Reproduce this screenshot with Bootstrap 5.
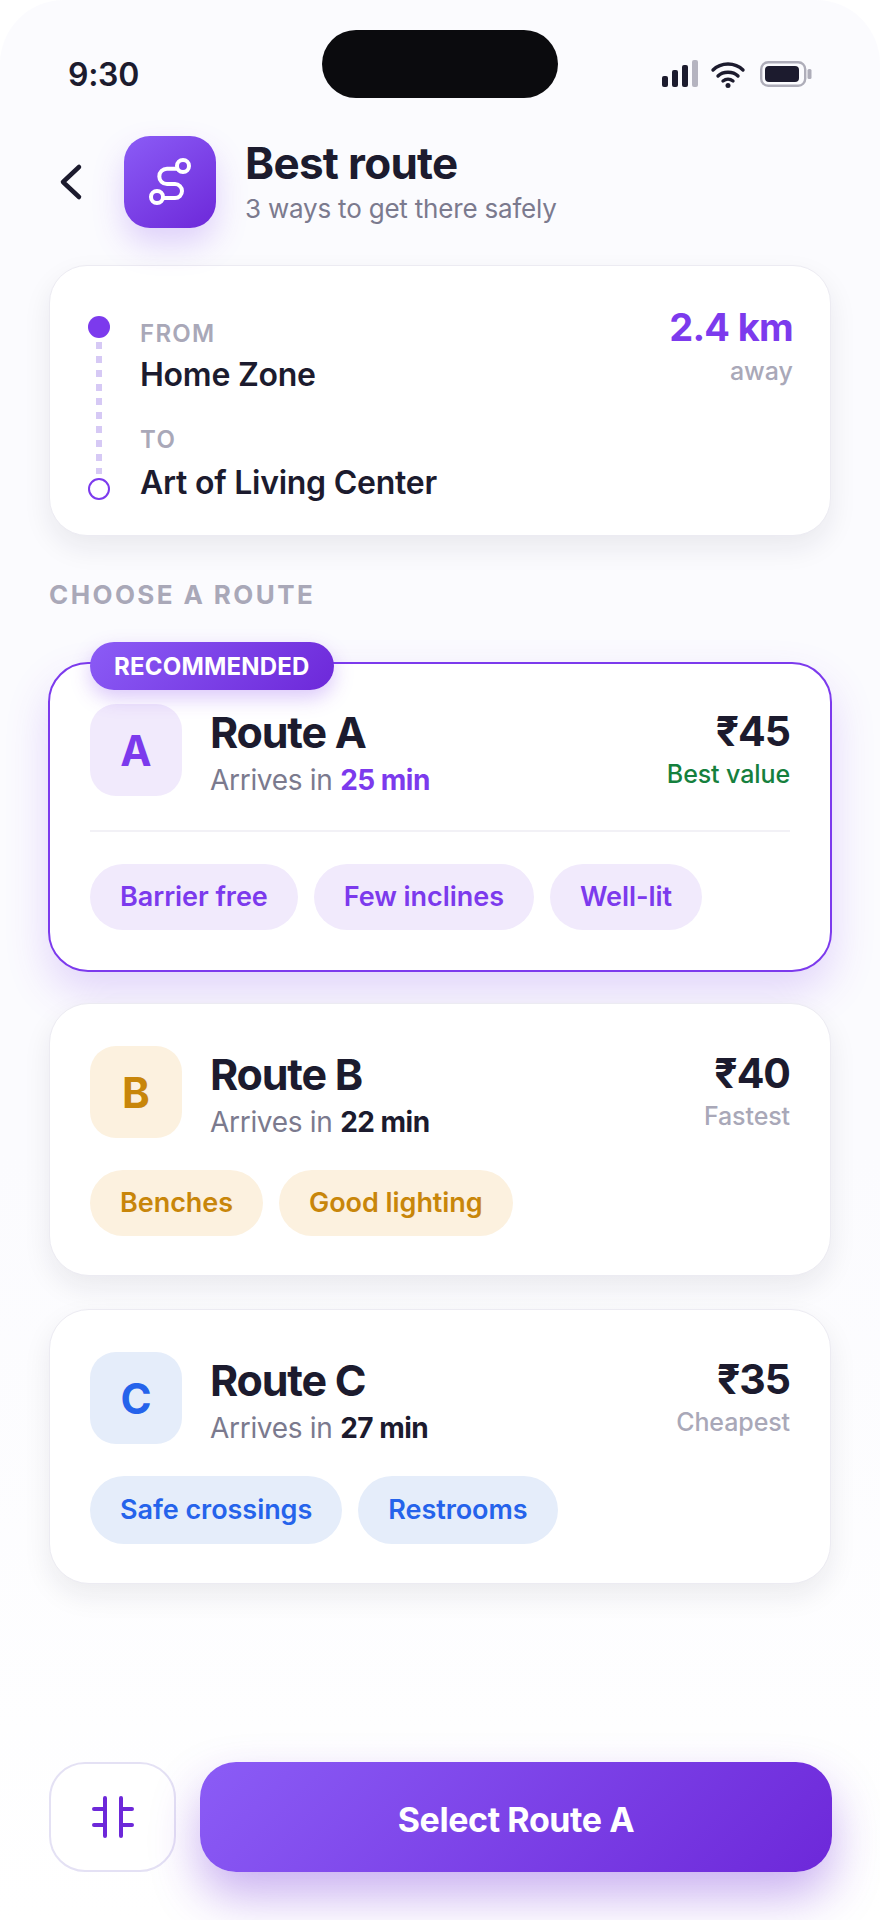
<!DOCTYPE html>
<html lang="en">
  <head>
    <meta charset="UTF-8" />
    <meta name="viewport" content="width=device-width, initial-scale=1.0" />
    <title>Best route</title>
    <link href="https://cdn.jsdelivr.net/npm/bootstrap@5.3.0/dist/css/bootstrap.min.css" rel="stylesheet" />
    <style>
      body {
        background: #fff;
        font-family: "Inter", "Noto Sans", sans-serif;
        color: #1c1b2e;
      }
      .phone {
        height: 1920px;
        border-radius: 64px 64px 0 0;
        background: linear-gradient(180deg, #fbfbfe 0%, #fbfbfe 60%, #ffffff 100%);
        padding: 0 49px;
        overflow: hidden;
      }
      .status-row {
        height: 98px;
        padding: 30px 18.5px 0 19px;
        margin-bottom: 38px;
      }
      .status-side { flex: 1 1 0; }
      .clock { font-size: 32px; font-weight: 600; line-height: 1; padding-top: 29px; letter-spacing: -.3px; }
      .island { width: 236px; height: 68px; background: #0b0b0e; border-radius: 34px; }
      .status-icons { padding-top: 30px; height: 68px; }
      .head-row { height: 92px; margin-bottom: 37px; }
      .back-icon { width: 75px; }
      .app-tile {
        width: 92px; height: 92px; border-radius: 26px;
        background: linear-gradient(145deg, #8b5cf6, #6d28d9);
        box-shadow: 0 16px 32px rgba(124, 58, 237, .22);
      }
      .head-copy { margin-left: 29px; padding-top: 1px; }
      .head-title { font-size: 44px; font-weight: 700; line-height: 50px; letter-spacing: -.7px; }
      .head-sub { font-size: 26px; line-height: 36px; color: #7b7a8e; letter-spacing: -.2px; margin-top: 3px; }
      .sheet {
        border: 1px solid #ecebf2;
        border-radius: 40px;
        background: #fff;
        box-shadow: 0 12px 28px rgba(28, 27, 46, .08);
      }
      .trip-card { height: 271px; padding: 39px 37px 0 38px; border-radius: 38px; }
      .rail { width: 22px; margin: 11px 30px 0 0; height: 184px; }
      .rail-on { width: 22px; height: 22px; border-radius: 50%; background: #7c3aed; }
      .rail-off { width: 22px; height: 22px; border-radius: 50%; border: 2px solid #7c3aed; background: #fff; }
      .rail-dash {
        flex: 1 1 0; width: 6px; margin: 4px 0;
        background: repeating-linear-gradient(180deg, #d6c9f5 0 7px, transparent 7px 14px);
      }
      .trip-label { font-size: 24px; line-height: 32px; font-weight: 600; color: #a9a8b8; letter-spacing: 1.3px; }
      .trip-name { font-size: 32px; line-height: 42px; font-weight: 600; letter-spacing: -.25px; margin-top: 4px; }
      .trip-gap { margin-top: 28px; }
      .trip-gap + .trip-name { margin-top: 6px; }
      .trip-text { padding-top: 13px; }
      .km { font-size: 38px; line-height: 44px; font-weight: 700; color: #7c3aed; letter-spacing: -.7px; }
      .km-note { font-size: 25px; line-height: 36px; font-weight: 500; color: #a9a8b8; margin-top: 4px; }
      .section-label {
        font-size: 26px; line-height: 32px; font-weight: 700; color: #a9a8b8; letter-spacing: 2.4px;
        margin: 43px 0 51px;
      }
      .route-card { padding: 42px 40px 39px; margin-bottom: 33px; }
      .route-picked {
        border: 2px solid #7c3aed;
        box-shadow: 0 20px 44px rgba(124, 58, 237, .2);
        padding: 40px 40px 39.5px;
        margin: 0 -1px 31.5px;
      }
      .pick-badge {
        left: 40px; top: -22px; height: 48px; padding: 2px 24px 0;
        font-size: 24px; font-weight: 700; color: #fff; letter-spacing: .2px;
        border-radius: 24px;
        background: linear-gradient(135deg, #8b5cf6, #6d28d9);
        box-shadow: 0 8px 20px rgba(124, 58, 237, .28);
      }
      .route-top { height: 92px; }
      .letter-tile {
        width: 92px; height: 92px; border-radius: 26px; font-size: 42px; font-weight: 700;
        margin-right: 28px; padding-top: 1px;
      }
      .tone-violet { background: #f1eafc; color: #7c3aed; }
      .tone-amber { background: #fcf1df; color: #c8860a; }
      .tone-blue { background: #e5edfa; color: #2563eb; }
      .route-name { font-size: 43px; line-height: 50px; font-weight: 700; letter-spacing: -1.2px; margin-top: 3px; }
      .route-eta { font-size: 28px; line-height: 36px; color: #7b7a8e; letter-spacing: -.3px; margin-top: 5px; }
      .route-eta b { font-weight: 700; color: #1c1b2e; letter-spacing: -.5px; }
      .route-eta b.eta-hi { color: #7c3aed; }
      .route-fare { font-size: 41px; line-height: 50px; font-weight: 700; letter-spacing: -1px; margin-top: 2px; }
      .route-note { font-size: 25px; line-height: 36px; font-weight: 500; color: #a9a8b8; letter-spacing: -.1px; }
      .route-note.note-good { color: #15803d; }
      .route-rule { height: 2px; background: #f2f1f6; margin: 34px 0 32px; }
      .chip-row { gap: 16px; margin-top: 32px; }
      .route-rule + .chip-row { margin-top: 0; }
      .chip {
        height: 66px; padding: 0 30px; border-radius: 33px; font-size: 27px; font-weight: 600; letter-spacing: -.05px;
      }
      .chip.chip-tall { height: 68px; border-radius: 34px; }
      .foot-row { position: absolute; left: 49px; right: 48px; top: 1762px; gap: 24px; }
      .filter-btn {
        width: 127px; height: 110px; border: 2px solid #e4e1f4; border-radius: 36px; background: #fff; padding: 0;
      }
      .select-btn {
        height: 110px; border: 0; border-radius: 36px; color: #fff; font-size: 34px; font-weight: 700; letter-spacing: -.4px;
        padding-top: 10px;
        background: linear-gradient(135deg, #8b5cf6, #6d28d9);
        box-shadow: 0 24px 48px rgba(109, 40, 217, .36);
      }
    </style>
  </head>
  <body>
    <div class="phone position-relative">
      <div class="status-row d-flex align-items-start">
        <div class="status-side clock">9:30</div>
        <div class="island"></div>
        <div class="status-side status-icons d-flex justify-content-end">
          <svg width="152" height="28" viewBox="0 0 152 28">
            <g fill="#1c1b2e">
              <rect x="1" y="16" width="6" height="11" rx="2" />
              <rect x="11" y="10" width="6" height="17" rx="2" />
              <rect x="21" y="5" width="6" height="22" rx="2" />
            </g>
            <rect x="31" y="0" width="6" height="27" rx="2" fill="#b5b4c0" />
            <g fill="none" stroke="#1c1b2e" stroke-width="3.4" stroke-linecap="round">
              <path d="M52 10 C60 2 74 2 82 10" />
              <path d="M57 16 C62 11 72 11 77 16" />
              <path d="M62 21 C65 18.600 69 18.600 72 21" />
            </g>
            <circle cx="67" cy="25.500" r="2.500" fill="#1c1b2e" />
            <rect x="100.200" y="2.200" width="44" height="23.600" rx="7" fill="none" stroke="#aeadb9" stroke-width="2.400" />
            <rect x="104" y="6" width="34" height="16" rx="4" fill="#1c1b2e" />
            <rect x="146.500" y="9" width="4" height="10" rx="1.500" fill="#aeadb9" />
          </svg>
        </div>
      </div>

      <div class="head-row d-flex align-items-center">
        <div class="back-icon flex-shrink-0">
          <svg width="36" height="40" viewBox="0 0 36 40">
            <path d="M30 5 L14 20 L30 35" fill="none" stroke="#1c1b2e" stroke-width="4.500" stroke-linecap="round" stroke-linejoin="round" />
          </svg>
        </div>
        <div class="app-tile flex-shrink-0 d-flex align-items-center justify-content-center">
          <svg width="92" height="92" viewBox="0 0 92 92">
            <g fill="none" stroke="#fff" stroke-width="4">
              <path d="M53 32.700 H43 a7.700 7.700 0 0 0 0 15.400 H51 a7 7 0 0 1 0 14 H40" />
              <circle cx="59" cy="30" r="6" />
              <circle cx="33" cy="61" r="6" />
            </g>
          </svg>
        </div>
        <div class="flex-grow-1 head-copy">
          <div class="head-title">Best route</div>
          <div class="head-sub">3 ways to get there safely</div>
        </div>
      </div>

      <div class="sheet trip-card d-flex">
        <div class="rail d-flex flex-column align-items-center flex-shrink-0">
          <div class="rail-on flex-shrink-0"></div>
          <div class="rail-dash"></div>
          <div class="rail-off flex-shrink-0"></div>
        </div>
        <div class="trip-text flex-grow-1">
          <div class="trip-label">FROM</div>
          <div class="trip-name">Home Zone</div>
          <div class="trip-label trip-gap">TO</div>
          <div class="trip-name">Art of Living Center</div>
        </div>
        <div class="text-end">
          <div class="km">2.4 km</div>
          <div class="km-note">away</div>
        </div>
      </div>

      <div class="section-label">CHOOSE A ROUTE</div>

      <div class="sheet route-card route-picked position-relative">
        <div class="pick-badge position-absolute d-flex align-items-center">RECOMMENDED</div>
        <div class="route-top d-flex">
          <div class="letter-tile tone-violet d-flex align-items-center justify-content-center">A</div>
          <div class="flex-grow-1">
            <div class="route-name">Route A</div>
            <div class="route-eta">Arrives in <b class="eta-hi">25 min</b></div>
          </div>
          <div class="text-end">
            <div class="route-fare">₹45</div>
            <div class="route-note note-good">Best value</div>
          </div>
        </div>
        <div class="route-rule"></div>
        <div class="chip-row d-flex">
          <span class="chip tone-violet d-flex align-items-center">Barrier free</span>
          <span class="chip tone-violet d-flex align-items-center">Few inclines</span>
          <span class="chip tone-violet d-flex align-items-center">Well-lit</span>
        </div>
      </div>

      <div class="sheet route-card position-relative">
        <div class="route-top d-flex">
          <div class="letter-tile tone-amber d-flex align-items-center justify-content-center">B</div>
          <div class="flex-grow-1">
            <div class="route-name">Route B</div>
            <div class="route-eta">Arrives in <b>22 min</b></div>
          </div>
          <div class="text-end">
            <div class="route-fare">₹40</div>
            <div class="route-note">Fastest</div>
          </div>
        </div>
        <div class="chip-row d-flex">
          <span class="chip tone-amber d-flex align-items-center">Benches</span>
          <span class="chip tone-amber d-flex align-items-center">Good lighting</span>
        </div>
      </div>

      <div class="sheet route-card position-relative">
        <div class="route-top d-flex">
          <div class="letter-tile tone-blue d-flex align-items-center justify-content-center">C</div>
          <div class="flex-grow-1">
            <div class="route-name">Route C</div>
            <div class="route-eta">Arrives in <b>27 min</b></div>
          </div>
          <div class="text-end">
            <div class="route-fare">₹35</div>
            <div class="route-note">Cheapest</div>
          </div>
        </div>
        <div class="chip-row d-flex">
          <span class="chip chip-tall tone-blue d-flex align-items-center">Safe crossings</span>
          <span class="chip chip-tall tone-blue d-flex align-items-center">Restrooms</span>
        </div>
      </div>

      <div class="foot-row d-flex">
        <button class="filter-btn btn flex-shrink-0 d-flex align-items-center justify-content-center">
          <svg width="44" height="44" viewBox="0 0 44 44">
            <path d="M17 3 V41 M33 3 V41 M6 14 H17 M6 30 H17 M33 14 H44 M33 30 H44" transform="translate(-3 0)" fill="none" stroke="#6d28d9" stroke-width="4" stroke-linecap="round" />
          </svg>
        </button>
        <button class="select-btn btn flex-grow-1">Select Route A</button>
      </div>
    </div>
  </body>
</html>
